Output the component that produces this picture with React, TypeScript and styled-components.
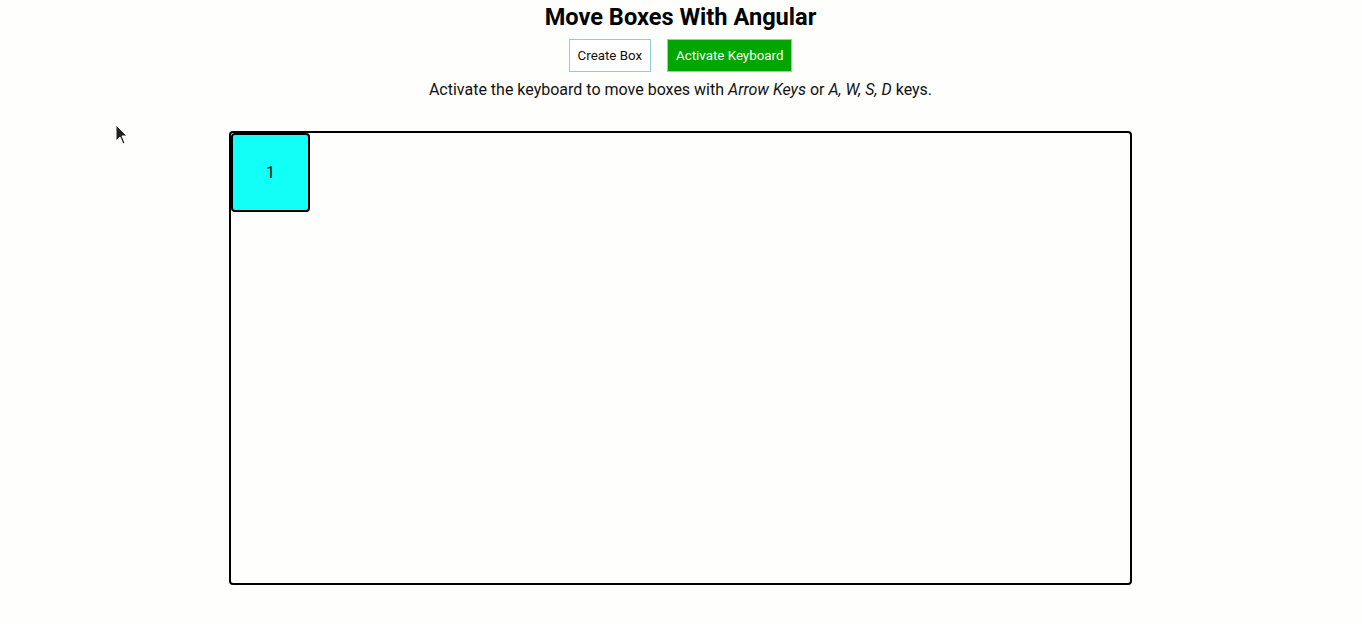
import React, { useState } from 'react'
import styled, { createGlobalStyle } from 'styled-components'

const GlobalStyle = createGlobalStyle`
  body {
    margin: 0;
    background: #fefefc;
    font-family: Roboto, 'Liberation Sans', sans-serif;
    color: #111;
  }
`

const Page = styled.div`
  position: relative;
  display: flex;
  flex-direction: column;
  align-items: center;
  padding: 3px 1px 0 0;
`

const Title = styled.h1`
  margin: 0;
  font-size: 23.6px;
  line-height: 28px;
  font-weight: 700;
  color: #000;
`

const Toolbar = styled.div`
  display: flex;
  gap: 16px;
  margin-top: 8px;
`

const Button = styled.button<{ $primary?: boolean }>`
  height: 33px;
  padding: 0 8px;
  font-family: Roboto, 'Liberation Sans', sans-serif;
  font-size: 13.333px;
  border: 1px solid ${(p) => (p.$primary ? '#7fd6c8' : '#8ccfdc')};
  background: ${(p) => (p.$primary ? '#00a600' : '#fff')};
  color: ${(p) => (p.$primary ? '#fff' : '#111')};
  cursor: pointer;
`

const Hint = styled.p`
  margin: 8px 0 0;
  font-size: 16px;
  line-height: 19px;
`

const Board = styled.div`
  position: relative;
  margin-top: 32px;
  width: 899px;
  height: 450px;
  border: 2px solid #000;
  border-radius: 4px;
`

const BoxItem = styled.div`
  position: absolute;
  box-sizing: border-box;
  width: 79px;
  height: 79px;
  display: flex;
  align-items: center;
  justify-content: center;
  background: #12fff7;
  border: 2px solid #000;
  border-radius: 4px;
  font-size: 16px;
`

const Cursor = styled.svg`
  position: absolute;
  left: 115px;
  top: 124px;
`

interface Box {
  id: number
  x: number
  y: number
}

export default function App() {
  const [boxes] = useState<Box[]>([{ id: 1, x: 0, y: 0 }])

  return (
    <>
      <GlobalStyle />
      <Page>
        <Title>Move Boxes With Angular</Title>
        <Toolbar>
          <Button>Create Box</Button>
          <Button $primary>Activate Keyboard</Button>
        </Toolbar>
        <Hint>
          Activate the keyboard to move boxes with <em>Arrow Keys</em> or <em>A, W, S, D</em> keys.
        </Hint>
        <Board>
          {boxes.map((box) => (
            <BoxItem key={box.id} style={{ left: box.x, top: box.y }}>
              {box.id}
            </BoxItem>
          ))}
        </Board>
        <Cursor width='14' height='22' viewBox='0 0 14 22'>
          <path d='M1 1 L1 17 L5 13 L8 20 L10 19 L7 12 L12 12 Z' fill='#222' stroke='#fff' strokeWidth='1' />
        </Cursor>
      </Page>
    </>
  )
}
